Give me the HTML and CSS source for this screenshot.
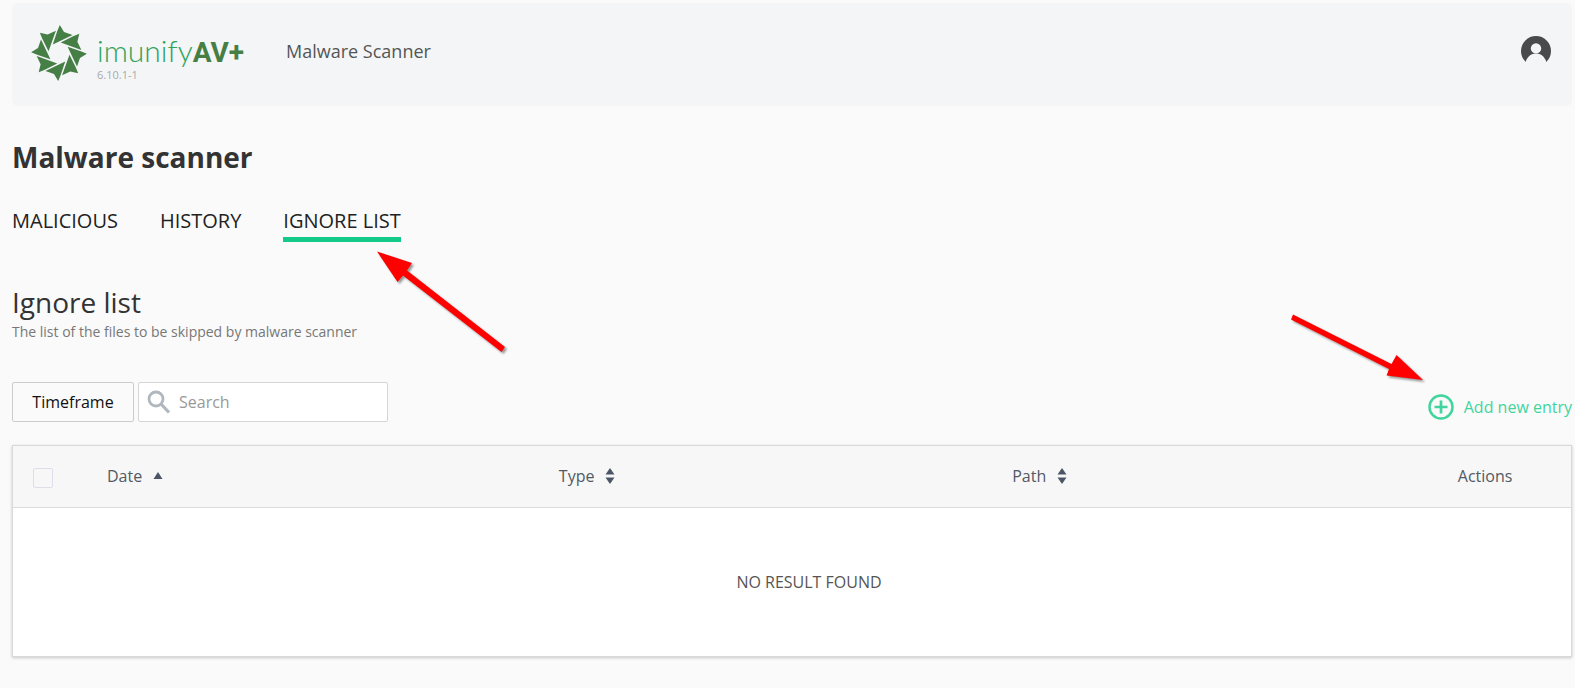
FILE: index.html
```
<!DOCTYPE html>
<html lang="en">
  <head>
    <meta charset="UTF-8" />
    <meta name="viewport" content="width=device-width, initial-scale=1.0" />
    <title>ImunifyAV+ - Malware Scanner</title>
    <link rel="stylesheet" href="styles.css">
  </head>
  <body>
    <header class="header">
      <a href="#" class="brand">
        <svg class="brand-mark" width="58" height="58" viewBox="-29 -29 58 58" fill="#467f45">
          <defs>
            <path id="blade" d="M.8-27.900L5-21L13.600-18L-6.200-8.600L-1.800-21.800Z"/>
          </defs>
          <use href="#blade"/>
          <use href="#blade" transform="rotate(45)"/>
          <use href="#blade" transform="rotate(90)"/>
          <use href="#blade" transform="rotate(135)"/>
          <use href="#blade" transform="rotate(180)"/>
          <use href="#blade" transform="rotate(225)"/>
          <use href="#blade" transform="rotate(270)"/>
          <use href="#blade" transform="rotate(315)"/>
        </svg>
        <span class="brand-text">
          <span class="brand-name">imunify<b>AV+</b></span>
          <span class="brand-version">6.10.1-1</span>
        </span>
      </a>
      <nav class="header-nav">
        <a href="#">Malware Scanner</a>
      </nav>
      <button type="button" class="account" aria-label="Account">
        <svg width="30" height="30" viewBox="0 0 30 30">
          <circle cx="15" cy="15" r="15" fill="#4a4a4a"/>
          <circle cx="15" cy="12.4" r="5.2" fill="#f3f5f7"/>
          <circle cx="15" cy="28.2" r="10.6" fill="#f3f5f7"/>
        </svg>
      </button>
    </header>

    <main>
      <h1 class="page-title">Malware scanner</h1>

      <nav class="tabs">
        <a href="#" class="tab">MALICIOUS</a>
        <a href="#" class="tab">HISTORY</a>
        <a href="#" class="tab active">IGNORE LIST
          <svg class="arrow arrow-tab" width="136" height="108" viewBox="0 0 136 108" fill="#f00">
            <path d="M1 1.5L36 13L31 20.5L129 97L125.500 102L27 25.500L21.500 32Z"/>
          </svg>
        </a>
      </nav>

      <h2 class="section-title">Ignore list</h2>
      <p class="section-description">The list of the files to be skipped by malware scanner</p>

      <div class="toolbar">
        <button type="button" class="timeframe">Timeframe</button>
        <label class="search">
          <svg width="24" height="24" viewBox="0 0 24 24" fill="none" stroke="#b1b7bf">
            <circle cx="9" cy="9" r="7" stroke-width="2.800"/>
            <path d="M14 14L22 22.500" stroke-width="3.200"/>
          </svg>
          <input type="text" placeholder="Search" aria-label="Search" />
        </label>
        <button type="button" class="add-entry">
          <svg width="26" height="26" viewBox="0 0 26 26" fill="none" stroke="#41d59e">
            <circle cx="13" cy="13" r="11.500" stroke-width="2.500"/>
            <path d="M13 6.500V19.500M6.500 13H19.500" stroke-width="2.700"/>
          </svg>
          Add new entry
          <svg class="arrow arrow-add" width="140" height="76" viewBox="0 0 140 76" fill="#f00">
            <path d="M3 1.500L101.500 51L106.500 42L133 67L96.500 62.500L99 56L1 6.500Z"/>
          </svg>
        </button>
      </div>

      <table class="entries">
        <thead>
          <tr>
            <th class="col-check"><input type="checkbox" aria-label="Select all" /></th>
            <th class="col-date">
              <button type="button" class="sort">Date
                <svg width="10" height="18" viewBox="0 0 10 18" fill="#4c5667"><path d="M5 5L9.500 12H.5Z"/></svg>
              </button>
            </th>
            <th class="col-type">
              <button type="button" class="sort">Type
                <svg width="10" height="18" viewBox="0 0 10 18" fill="#4c5667"><path d="M5 1L9.500 7.500H.5ZM5 17L9.500 10.500H.5Z"/></svg>
              </button>
            </th>
            <th class="col-path">
              <button type="button" class="sort">Path
                <svg width="10" height="18" viewBox="0 0 10 18" fill="#4c5667"><path d="M5 1L9.500 7.500H.5ZM5 17L9.500 10.500H.5Z"/></svg>
              </button>
            </th>
            <th>Actions</th>
          </tr>
        </thead>
        <tbody>
          <tr>
            <td class="empty" colspan="5">NO RESULT FOUND</td>
          </tr>
        </tbody>
      </table>
    </main>
  </body>
</html>
```
FILE: styles.css
```
:root {
  --background: #fafafa;
  --header: #f3f5f7;
  --green: #13ca89;
  --green-light: #41d59e;
  --text: #333;
  --text-table: #525a65;
  --border: #d9d9d9;
}

* {
  box-sizing: border-box;
}

body {
  margin: 0;
  padding: 3px 3px 30px 12px;
  font-family: "Open Sans", "Noto Sans", sans-serif;
  font-size: 16px;
  background-color: var(--background);
  color: var(--text);
}

a {
  color: inherit;
  text-decoration: none;
}

button {
  padding: 0;
  border: 0;
  background: none;
  font: inherit;
  color: inherit;
  cursor: pointer;
}

.header {
  display: flex;
  align-items: flex-start;
  height: 103px;
  padding: 21px 21px 0 18px;
  border-radius: 6px;
  background-color: var(--header);
}

.brand {
  display: flex;
  align-items: center;
  gap: 9px;
}

.brand-text {
  display: flex;
  flex-direction: column;
  padding-top: 8px;
}

.brand-name {
  font-family: Lato, sans-serif;
  font-size: 30px;
  font-weight: 300;
  line-height: 32px;
  color: #2fa35a;
}

.brand-name b {
  font-family: Roboto, sans-serif;
  font-size: 28px;
  font-weight: 700;
  color: #467f45;
}

.brand-version {
  font-size: 11px;
  line-height: 12px;
  color: #a9a9a9;
}

.header-nav {
  margin-top: 15px;
  margin-left: 42px;
  font-size: 18px;
  line-height: 25px;
  color: #555;
}

.account {
  display: flex;
  margin-top: 12px;
  margin-left: auto;
}

.page-title {
  margin: 31px 0 0;
  font-size: 28px;
  font-weight: 700;
  line-height: 40px;
}

.tabs {
  display: flex;
  gap: 42px;
  margin-top: 29px;
}

.tab {
  position: relative;
  padding-bottom: 2px;
  border-bottom: 5px solid transparent;
  font-size: 20px;
  line-height: 29px;
  color: #222;
}

.tab.active {
  border-bottom-color: var(--green);
}

/* red pointers lying over the page */
.arrow {
  position: absolute;
  pointer-events: none;
  filter: drop-shadow(2px 2px 1px rgba(0, 0, 0, 0.4));
}

.arrow-tab {
  top: 44px;
  left: 93px;
}

.arrow-add {
  right: 142px;
  bottom: 31px;
}

.section-title {
  margin: 41px 0 0;
  font-size: 28px;
  font-weight: 400;
  line-height: 38px;
}

.section-description {
  margin: 1px 0 0;
  font-size: 14px;
  line-height: 20px;
  color: #777;
}

.toolbar {
  display: flex;
  align-items: flex-start;
  gap: 4px;
  margin-top: 40px;
}

.timeframe {
  width: 122px;
  height: 40px;
  border: 1px solid #ccc;
  border-radius: 2px;
  color: #111;
}

.search {
  display: flex;
  align-items: center;
  gap: 8px;
  width: 250px;
  height: 40px;
  padding: 0 8px;
  border: 1px solid #d5d5d5;
  border-radius: 2px;
  background-color: #fff;
}

.search svg {
  flex: none;
}

.search input {
  min-width: 0;
  padding: 0;
  border: 0;
  outline: 0;
  background: none;
  font: inherit;
  color: var(--text);
}

.search input::placeholder {
  color: #999;
}

.add-entry {
  position: relative;
  display: flex;
  align-items: center;
  gap: 10px;
  margin-top: 12px;
  margin-left: auto;
  color: var(--green-light);
}

.entries {
  width: 100%;
  margin-top: 23px;
  border: 1px solid var(--border);
  border-spacing: 0;
  table-layout: fixed;
  background-color: #fff;
  color: var(--text-table);
  box-shadow: 0 1px 3px rgba(0, 0, 0, 0.2);
}

.entries th {
  height: 62px;
  padding: 0 0 2px;
  border-bottom: 1px solid #ddd;
  background-color: #f7f7f7;
  font-weight: 400;
  text-align: left;
}

.entries .col-check {
  width: 94px;
  padding-left: 20px;
}

.col-date {
  width: 29%;
}

.col-type {
  width: 29.1%;
}

.col-path {
  width: 28.6%;
}

.col-check input {
  display: block;
  width: 20px;
  height: 20px;
  margin: 4px 0 0;
  appearance: none;
  border: 1px solid #dcdfeb;
  border-radius: 2px;
}

.sort {
  display: flex;
  align-items: center;
  gap: 11px;
}

.entries .empty {
  height: 148px;
  padding: 0 0 0 34px;
  color: #555;
  text-align: center;
}
```
